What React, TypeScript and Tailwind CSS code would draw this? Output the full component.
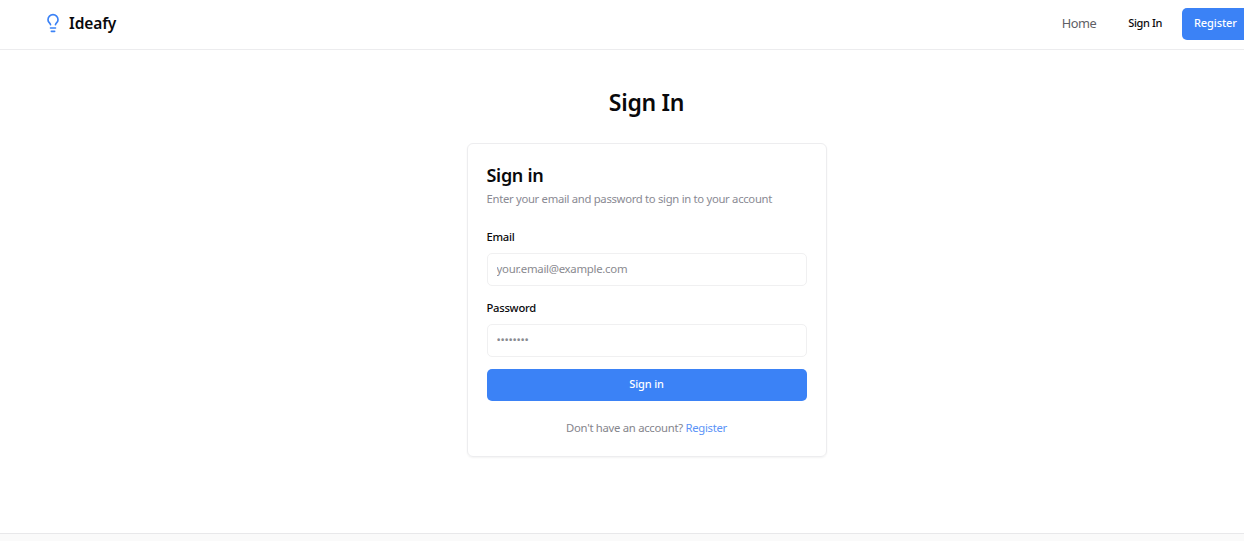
import { Lightbulb } from 'lucide-react'

function Field({
    id,
    label,
    type,
    placeholder,
}: {
    id: string
    label: string
    type: string
    placeholder: string
}) {
    return (
        <div className="flex flex-col gap-2">
            <label htmlFor={id} className="text-[11.2px] leading-4 font-medium tracking-[-0.25px] text-[#09090b]">
                {label}
            </label>
            <input
                id={id}
                type={type}
                placeholder={placeholder}
                className="h-[33px] w-full rounded-[5px] border border-[#f0f0f1] bg-white px-[9px] pb-[2px] text-[11.4px] tracking-[-0.28px] text-[#09090b] outline-none placeholder:text-[#8a8a90]"
            />
        </div>
    )
}

function Header() {
    return (
        <header className="flex h-[50px] items-center justify-between border-b border-[#ececee] pb-[3px] pl-[43px]">
            <a href="#" className="flex items-center gap-[6px]">
                <Lightbulb className="size-5 text-[#3b82f6]" strokeWidth={2} />
                <span className="text-[15.5px] leading-6 font-semibold tracking-[-0.1px] text-[#09090b]">Ideafy</span>
            </a>
            <nav className="flex items-center pt-[2px]">
                <a href="#" className="mr-8 text-[12.8px] tracking-[-0.5px] text-[#5f5f66]">Home</a>
                <a href="#" className="mr-5 pb-[2px] text-[11px] font-medium tracking-[-0.38px] text-[#09090b]">Sign In</a>
                <a
                    href="#"
                    className="flex h-8 w-[62px] items-center rounded-l-[5px] bg-[#3b82f6] pb-[2px] pl-3 text-[11px] font-medium tracking-[-0.1px] text-white"
                >
                    Register
                </a>
            </nav>
        </header>
    )
}

export default function App() {
    return (
        <div className="flex h-[541px] flex-col overflow-hidden bg-white font-['Noto_Sans',sans-serif]">
            <Header />
            <main className="flex flex-1 flex-col items-center pt-9 pl-[49px]">
                <h1 className="text-[23px] leading-8 font-semibold tracking-[-0.3px] text-[#09090b]">Sign In</h1>
                <div className="mt-[25px] h-[314px] w-[360px] rounded-[6px] border border-[#ededef] px-[19px] pt-[19px] shadow-xs">
                    <h2 className="text-[18px] leading-6 font-semibold tracking-[-0.3px] text-[#09090b]">Sign in</h2>
                    <p className="mt-1 text-[11.3px] leading-4 tracking-[-0.31px] text-[#8a8a93]">
                        Enter your email and password to sign in to your account
                    </p>
                    <form className="mt-[22px] flex flex-col">
                        <Field id="email" label="Email" type="email" placeholder="your.email@example.com" />
                        <div className="mt-[14px]">
                            <Field id="password" label="Password" type="password" placeholder="••••••••" />
                        </div>
                        <button
                            type="button"
                            className="mt-3 h-8 rounded-[5px] bg-[#3b82f6] pb-[2px] text-[11px] font-medium tracking-[-0.15px] text-white"
                        >
                            Sign in
                        </button>
                    </form>
                    <p className="mt-[19px] text-center text-[11.3px] leading-4 tracking-[-0.29px] text-[#85858c]">
                        Don't have an account? <a href="#" className="text-[#5b93f7]">Register</a>
                    </p>
                </div>
            </main>
            <footer className="h-2 border-t border-[#e8e8ea] bg-[#fafafa]" />
        </div>
    )
}
